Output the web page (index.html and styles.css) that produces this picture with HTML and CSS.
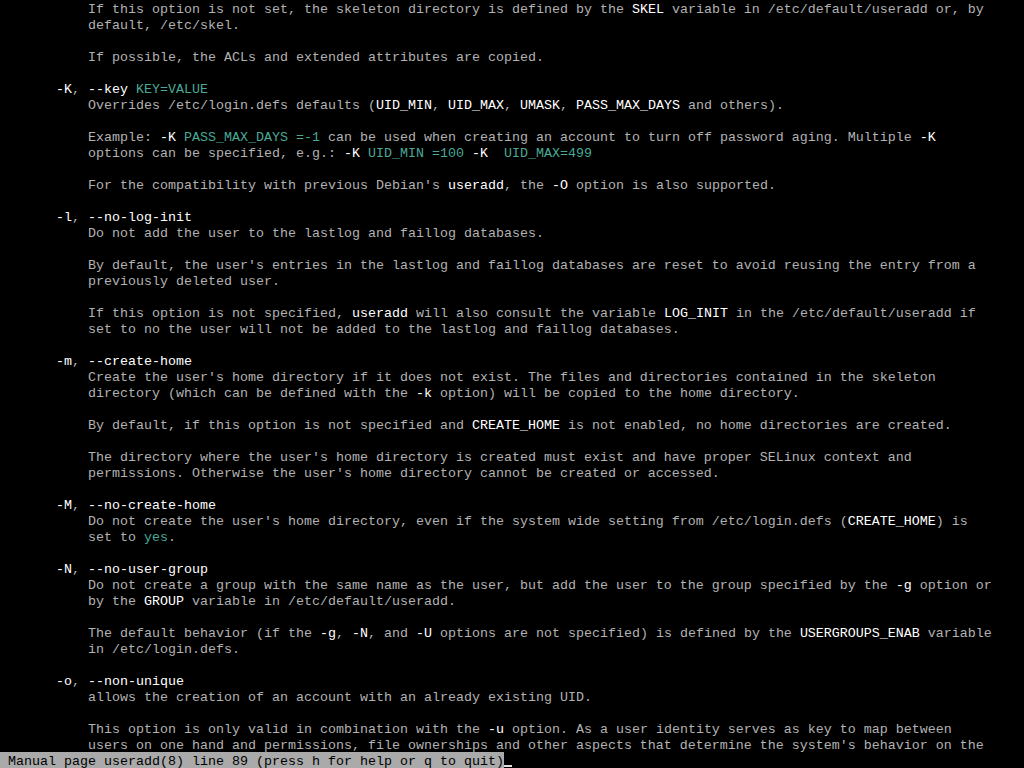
FILE: index.html
```html
<!DOCTYPE html>
<html lang="en">
<head>
  <meta charset="UTF-8">
  <meta name="viewport" content="width=device-width, initial-scale=1.0">
  <title>useradd(8)</title>
  <link rel="stylesheet" href="styles.css">
</head>
<body>
  <div class="screen">
    <div class="line txt">If this option is not set, the skeleton directory is defined by the <span class="b">SKEL</span> variable in /etc/default/useradd or, by</div>
    <div class="line txt">default, /etc/skel.</div>
    <div class="line"></div>
    <div class="line txt">If possible, the ACLs and extended attributes are copied.</div>
    <div class="line"></div>
    <div class="line opt"><span class="b">-K</span>, <span class="b">--key</span> <span class="u">KEY</span><span class="u">=VALUE</span></div>
    <div class="line txt">Overrides /etc/login.defs defaults (<span class="b">UID_MIN</span>, <span class="b">UID_MAX</span>, <span class="b">UMASK</span>, <span class="b">PASS_MAX_DAYS</span> and others).</div>
    <div class="line"></div>
    <div class="line txt">Example: <span class="b">-K</span> <span class="u">PASS_MAX_DAYS</span> <span class="u">=-1</span> can be used when creating an account to turn off password aging. Multiple <span class="b">-K</span></div>
    <div class="line txt">options can be specified, e.g.: <span class="b">-K</span> <span class="u">UID_MIN</span> <span class="u">=100</span> <span class="b">-K</span>  <span class="u">UID_MAX</span><span class="u">=499</span></div>
    <div class="line"></div>
    <div class="line txt">For the compatibility with previous Debian's <span class="b">useradd</span>, the <span class="b">-O</span> option is also supported.</div>
    <div class="line"></div>
    <div class="line opt"><span class="b">-l</span>, <span class="b">--no-log-init</span></div>
    <div class="line txt">Do not add the user to the lastlog and faillog databases.</div>
    <div class="line"></div>
    <div class="line txt">By default, the user's entries in the lastlog and faillog databases are reset to avoid reusing the entry from a</div>
    <div class="line txt">previously deleted user.</div>
    <div class="line"></div>
    <div class="line txt">If this option is not specified, <span class="b">useradd</span> will also consult the variable <span class="b">LOG_INIT</span> in the /etc/default/useradd if</div>
    <div class="line txt">set to no the user will not be added to the lastlog and faillog databases.</div>
    <div class="line"></div>
    <div class="line opt"><span class="b">-m</span>, <span class="b">--create-home</span></div>
    <div class="line txt">Create the user's home directory if it does not exist. The files and directories contained in the skeleton</div>
    <div class="line txt">directory (which can be defined with the <span class="b">-k</span> option) will be copied to the home directory.</div>
    <div class="line"></div>
    <div class="line txt">By default, if this option is not specified and <span class="b">CREATE_HOME</span> is not enabled, no home directories are created.</div>
    <div class="line"></div>
    <div class="line txt">The directory where the user's home directory is created must exist and have proper SELinux context and</div>
    <div class="line txt">permissions. Otherwise the user's home directory cannot be created or accessed.</div>
    <div class="line"></div>
    <div class="line opt"><span class="b">-M</span>, <span class="b">--no-create-home</span></div>
    <div class="line txt">Do not create the user's home directory, even if the system wide setting from /etc/login.defs (<span class="b">CREATE_HOME</span>) is</div>
    <div class="line txt">set to <span class="u">yes</span>.</div>
    <div class="line"></div>
    <div class="line opt"><span class="b">-N</span>, <span class="b">--no-user-group</span></div>
    <div class="line txt">Do not create a group with the same name as the user, but add the user to the group specified by the <span class="b">-g</span> option or</div>
    <div class="line txt">by the <span class="b">GROUP</span> variable in /etc/default/useradd.</div>
    <div class="line"></div>
    <div class="line txt">The default behavior (if the <span class="b">-g</span>, <span class="b">-N</span>, and <span class="b">-U</span> options are not specified) is defined by the <span class="b">USERGROUPS_ENAB</span> variable</div>
    <div class="line txt">in /etc/login.defs.</div>
    <div class="line"></div>
    <div class="line opt"><span class="b">-o</span>, <span class="b">--non-unique</span></div>
    <div class="line txt">allows the creation of an account with an already existing UID.</div>
    <div class="line"></div>
    <div class="line txt">This option is only valid in combination with the <span class="b">-u</span> option. As a user identity serves as key to map between</div>
    <div class="line txt">users on one hand and permissions, file ownerships and other aspects that determine the system's behavior on the</div>
    <div class="status"><span class="rev"> Manual page useradd(8) line 89 (press h for help or q to quit)</span><span class="cursor"></span></div>
  </div>
</body>
</html>
```

FILE: styles.css
```css
body {
  margin: 0;
  background: #000;
  overflow: hidden;
}
.screen {
  width: 1024px;
  height: 768px;
  font-family: "Liberation Mono", "DejaVu Sans Mono", monospace;
  font-size: 13.333px;
  color: #b2b2b2;
}
.line {
  height: 14px;
  padding-top: 2px;
  line-height: 16px;
  white-space: pre;
}
.opt {
  padding-left: 56px;
}
.txt {
  padding-left: 88px;
}
.b {
  color: #fff;
}
.u {
  color: #4aa896;
}
.status {
  display: flex;
  height: 16px;
  white-space: pre;
}
.rev {
  height: 14px;
  padding-top: 2px;
  line-height: 16px;
  background: #aaaaaa;
  color: #000;
}
.cursor {
  width: 8px;
  height: 2px;
  margin-top: 13px;
  background: #e0e0e0;
}
```
